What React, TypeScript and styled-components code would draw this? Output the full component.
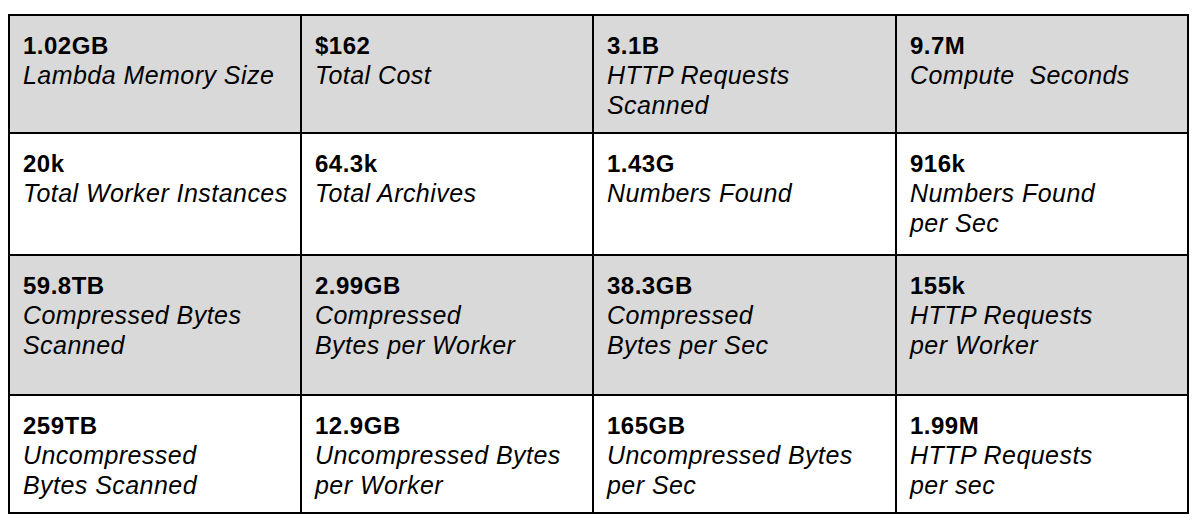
import React from "react";
import styled, { createGlobalStyle } from "styled-components";

const GlobalStyle = createGlobalStyle`
  html, body {
    margin: 0;
    padding: 0;
    background: #ffffff;
  }
  body {
    font-family: "Liberation Sans", Arial, sans-serif;
    color: #000000;
  }
`;

const Page = styled.main`
  padding: 14px 0 0 8px;
`;

const Grid = styled.section`
  display: grid;
  grid-template-columns: 292px 292px 303px 292px;
  grid-template-rows: 118px 122px 140px 118px;
  width: max-content;
  border-left: 2px solid #000;
  border-top: 2px solid #000;
`;

const Cell = styled.div<{ $shaded: boolean }>`
  box-sizing: border-box;
  padding: 15px 0 0 13px;
  border-right: 2px solid #000;
  border-bottom: 2px solid #000;
  background: ${(p) => (p.$shaded ? "#d9d9d9" : "#ffffff")};
  overflow: hidden;
`;

const Value = styled.div`
  font-weight: bold;
  font-size: 24px;
  line-height: 30px;
  letter-spacing: 0.5px;
`;

const Label = styled.div`
  font-style: italic;
  font-size: 25px;
  line-height: 29.5px;
  letter-spacing: 0.45px;
  white-space: pre;
`;

type Stat = { value: string; label: string };

const rows: Stat[][] = [
  [
    { value: "1.02GB", label: "Lambda Memory Size" },
    { value: "$162", label: "Total Cost" },
    { value: "3.1B", label: "HTTP Requests\nScanned" },
    { value: "9.7M", label: "Compute  Seconds" },
  ],
  [
    { value: "20k", label: "Total Worker Instances" },
    { value: "64.3k", label: "Total Archives" },
    { value: "1.43G", label: "Numbers Found" },
    { value: "916k", label: "Numbers Found\nper Sec" },
  ],
  [
    { value: "59.8TB", label: "Compressed Bytes\nScanned" },
    { value: "2.99GB", label: "Compressed\nBytes per Worker" },
    { value: "38.3GB", label: "Compressed\nBytes per Sec" },
    { value: "155k", label: "HTTP Requests\nper Worker" },
  ],
  [
    { value: "259TB", label: "Uncompressed\nBytes Scanned" },
    { value: "12.9GB", label: "Uncompressed Bytes\nper Worker" },
    { value: "165GB", label: "Uncompressed Bytes\nper Sec" },
    { value: "1.99M", label: "HTTP Requests\nper sec" },
  ],
];

export default function App() {
  return (
    <>
      <GlobalStyle />
      <Page>
        <Grid>
          {rows.map((row, r) =>
            row.map((stat, c) => (
              <Cell key={`${r}-${c}`} $shaded={r % 2 === 0}>
                <Value>{stat.value}</Value>
                <Label>{stat.label}</Label>
              </Cell>
            ))
          )}
        </Grid>
      </Page>
    </>
  );
}
